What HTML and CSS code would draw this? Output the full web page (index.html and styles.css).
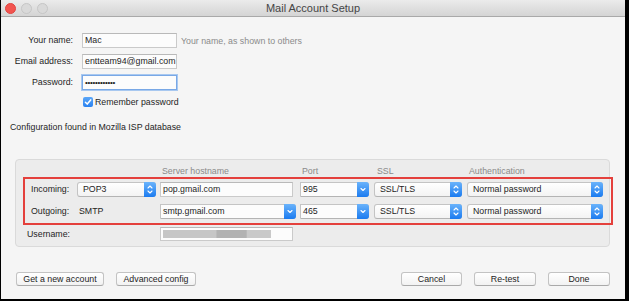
FILE: index.html
```html
<!DOCTYPE html>
<html>
<head>
<meta charset="utf-8">
<title>Mail Account Setup</title>
<link rel="stylesheet" href="styles.css">
</head>
<body>
<div class="window">
  <div class="titlebar">
    <div class="lights"><span class="light red"></span><span class="light"></span><span class="light"></span></div>
    <div class="title">Mail Account Setup</div>
    <div></div>
  </div>
  <div class="content">
    <div class="form">
      <div class="lbl">Your name:</div>
      <div class="field-row"><div class="input">Mac</div><span class="hint">Your name, as shown to others</span></div>
      <div class="lbl">Email address:</div>
      <div class="field-row"><div class="input">entteam94@gmail.com</div></div>
      <div class="lbl">Password:</div>
      <div class="field-row"><div class="input focus dots">••••••••••••</div></div>
      <div></div>
      <div class="check-row">
        <span class="checkbox"><svg width="10" height="10" viewBox="0 0 10 10"><path d="M2.4 5.2 L4.2 7.1 L7.7 2.9" fill="none" stroke="#fff" stroke-width="1.5" stroke-linecap="round" stroke-linejoin="round"/></svg></span>
        <span>Remember password</span>
      </div>
    </div>
    <div class="status">Configuration found in Mozilla ISP database</div>
    <div class="panel">
      <div class="grid head">
        <div></div><div></div>
        <div class="h">Server hostname</div>
        <div class="h">Port</div>
        <div class="h ssl">SSL</div>
        <div class="h">Authentication</div>
      </div>
      <div class="redbox">
        <div class="grid rows">
          <div class="rlbl">Incoming:</div>
          <div class="popup w79"><span class="val">POP3</span><span class="arrow"><svg width="12" height="15" viewBox="0 0 12 15"><path d="M4 6 L6 4 L8 6 M4 9 L6 11 L8 9" fill="none" stroke="#fff" stroke-width="1.1" stroke-linecap="round" stroke-linejoin="round"/></svg></span></div>
          <div class="input w133">pop.gmail.com</div>
          <div class="combo w69"><span class="val">995</span><span class="arrow"><svg width="12" height="15" viewBox="0 0 12 15"><path d="M4 6.5 L6 8.5 L8 6.5" fill="none" stroke="#fff" stroke-width="1.1" stroke-linecap="round" stroke-linejoin="round"/></svg></span></div>
          <div class="popup w88"><span class="val">SSL/TLS</span><span class="arrow"><svg width="12" height="15" viewBox="0 0 12 15"><path d="M4 6 L6 4 L8 6 M4 9 L6 11 L8 9" fill="none" stroke="#fff" stroke-width="1.1" stroke-linecap="round" stroke-linejoin="round"/></svg></span></div>
          <div class="popup w136"><span class="val">Normal password</span><span class="arrow"><svg width="12" height="15" viewBox="0 0 12 15"><path d="M4 6 L6 4 L8 6 M4 9 L6 11 L8 9" fill="none" stroke="#fff" stroke-width="1.1" stroke-linecap="round" stroke-linejoin="round"/></svg></span></div>

          <div class="rlbl">Outgoing:</div>
          <div class="plain">SMTP</div>
          <div class="combo w136"><span class="val">smtp.gmail.com</span><span class="arrow"><svg width="12" height="15" viewBox="0 0 12 15"><path d="M4 6.5 L6 8.5 L8 6.5" fill="none" stroke="#fff" stroke-width="1.1" stroke-linecap="round" stroke-linejoin="round"/></svg></span></div>
          <div class="combo w69"><span class="val">465</span><span class="arrow"><svg width="12" height="15" viewBox="0 0 12 15"><path d="M4 6.5 L6 8.5 L8 6.5" fill="none" stroke="#fff" stroke-width="1.1" stroke-linecap="round" stroke-linejoin="round"/></svg></span></div>
          <div class="popup w88"><span class="val">SSL/TLS</span><span class="arrow"><svg width="12" height="15" viewBox="0 0 12 15"><path d="M4 6 L6 4 L8 6 M4 9 L6 11 L8 9" fill="none" stroke="#fff" stroke-width="1.1" stroke-linecap="round" stroke-linejoin="round"/></svg></span></div>
          <div class="popup w136"><span class="val">Normal password</span><span class="arrow"><svg width="12" height="15" viewBox="0 0 12 15"><path d="M4 6 L6 4 L8 6 M4 9 L6 11 L8 9" fill="none" stroke="#fff" stroke-width="1.1" stroke-linecap="round" stroke-linejoin="round"/></svg></span></div>
        </div>
      </div>
      <div class="grid user">
        <div class="ulbl">Username:</div>
        <div class="input w133 uname"><span class="blur"></span></div>
      </div>
    </div>
    <div class="buttons">
      <div class="group">
        <div class="btn w88b">Get a new account</div>
        <div class="btn w80b">Advanced config</div>
      </div>
      <div class="group">
        <div class="btn w61b">Cancel</div>
        <div class="btn w62b">Re-test</div>
        <div class="btn w62b">Done</div>
      </div>
    </div>
  </div>
</div>
</body>
</html>
```

FILE: styles.css
```css
html, body {
  margin: 0;
  padding: 0;
  background: #000;
}
body {
  width: 629px;
  height: 301px;
  overflow: hidden;
  font-family: "Liberation Sans", Arial, sans-serif;
  font-size: 8.8px;
  color: #1e1e1e;
}
.window {
  margin-left: 1px;
  width: 624px;
  height: 299px;
  background: #f5f5f5;
  display: flex;
  flex-direction: column;
}
.titlebar {
  height: 16px;
  border-bottom: 1px solid #a9a9a9;
  background: linear-gradient(#ebebeb, #d4d4d4);
  display: grid;
  grid-template-columns: 1fr auto 1fr;
  align-items: center;
}
.lights {
  display: flex;
  gap: 5px;
  padding-left: 4px;
}
.light {
  width: 11px;
  height: 11px;
  border-radius: 50%;
  box-sizing: border-box;
  background: #d9d9d9;
  border: 1px solid #c6c6c6;
}
.light.red {
  background: #f2544f;
  border-color: #e04440;
}
.title {
  font-size: 11px;
  color: #454545;
  line-height: 16px;
}
.content {
  display: flex;
  flex-direction: column;
}
.form {
  display: grid;
  grid-template-columns: 72px 1fr;
  grid-template-rows: 15px 15px 15px 12px;
  column-gap: 9px;
  row-gap: 6px;
  padding-top: 16px;
}
.lbl {
  text-align: right;
  line-height: 15px;
}
.field-row {
  display: flex;
  align-items: center;
  gap: 4px;
}
.input {
  box-sizing: border-box;
  width: 95px;
  height: 15px;
  border: 1px solid #cacaca;
  border-top-color: #b9b9b9;
  background: #fcfcfc;
  padding-left: 2px;
  line-height: 13px;
  white-space: nowrap;
  overflow: hidden;
}
.input.focus {
  border-color: #79a8e6;
  box-shadow: 0 0 0 1px #a8c8f0;
}
.dots {
  font-size: 8px;
  letter-spacing: -0.3px;
}
.hint {
  color: #8b8b8b;
}
.check-row {
  display: flex;
  align-items: center;
  gap: 2px;
  padding-left: 1px;
}
.checkbox {
  width: 10px;
  height: 10px;
  border-radius: 2px;
  background: linear-gradient(#5aa6f8, #2a82f0);
  display: flex;
}
.status {
  margin-top: 14px;
  padding-left: 9px;
  line-height: 11px;
}
.panel {
  margin-top: 26px;
  margin-left: 14px;
  width: 595px;
  height: 88px;
  box-sizing: border-box;
  border: 1px solid #dadada;
  border-radius: 4px;
  background: #ececec;
  padding: 6px 0 5px 7px;
}
.grid {
  display: grid;
  grid-template-columns: 52px 83px 140px 74px 93px 136px;
}
.head {
  padding-left: 2px;
  height: 11px;
  line-height: 11px;
  color: #8a8a8a;
}
.h {
  padding-left: 2px;
}
.h.ssl {
  padding-left: 3px;
}
.redbox {
  margin-right: -4px;
  border: 2px solid #e4403c;
  padding: 3px 8px 4px 0;
}
.rows {
  grid-template-rows: 15px 15px;
  row-gap: 7px;
}
.rlbl {
  padding-left: 6px;
  line-height: 15px;
}
.plain {
  padding-left: 2px;
  line-height: 15px;
}
.w79 { width: 79px; }
.w88 { width: 88px; }
.w136 { width: 136px; }
.w133 { width: 133px; }
.w69 { width: 69px; }
.popup, .combo {
  box-sizing: border-box;
  height: 15px;
  display: flex;
  border: 1px solid #c4c4c4;
  border-bottom-color: #b4b4b4;
  background: linear-gradient(#ffffff, #f3f3f3);
  white-space: nowrap;
}
.popup {
  border-radius: 3px;
}
.combo {
  border-radius: 0 3px 3px 0;
  background: #fcfcfc;
}
.val {
  flex: 1;
  line-height: 13px;
  overflow: hidden;
}
.popup .val {
  padding-left: 5px;
}
.combo .val {
  padding-left: 2px;
}
.arrow {
  width: 12px;
  height: 15px;
  margin: -1px -1px -1px 0;
  border-radius: 0 3px 3px 0;
  background: linear-gradient(#6ab3fb, #1b7bf0);
  display: flex;
}
.user {
  margin-top: 2px;
  padding-left: 2px;
}
.ulbl {
  grid-column: 1 / 3;
  padding-left: 2px;
  line-height: 14px;
}
.uname {
  height: 14px;
  display: flex;
  align-items: center;
}
.blur {
  width: 108px;
  height: 8px;
  background: linear-gradient(90deg, #c6c6c6 0, #c6c6c6 49%, #b2b2b2 50%, #b2b2b2 77%, #c9c9c9 78%, #c9c9c9 100%);
}
.buttons {
  margin-top: 25px;
  display: flex;
  justify-content: space-between;
  padding: 0 15px;
}
.group {
  display: flex;
  gap: 12px;
}
.btn {
  box-sizing: border-box;
  height: 14px;
  border: 1px solid #c3c3c3;
  border-bottom-color: #a9a9a9;
  border-radius: 3px;
  background: linear-gradient(#ffffff, #f2f2f2);
  line-height: 12px;
  text-align: center;
}
.w88b { width: 88px; }
.w80b { width: 80px; }
.w61b { width: 61px; }
.w62b { width: 62px; }
```
